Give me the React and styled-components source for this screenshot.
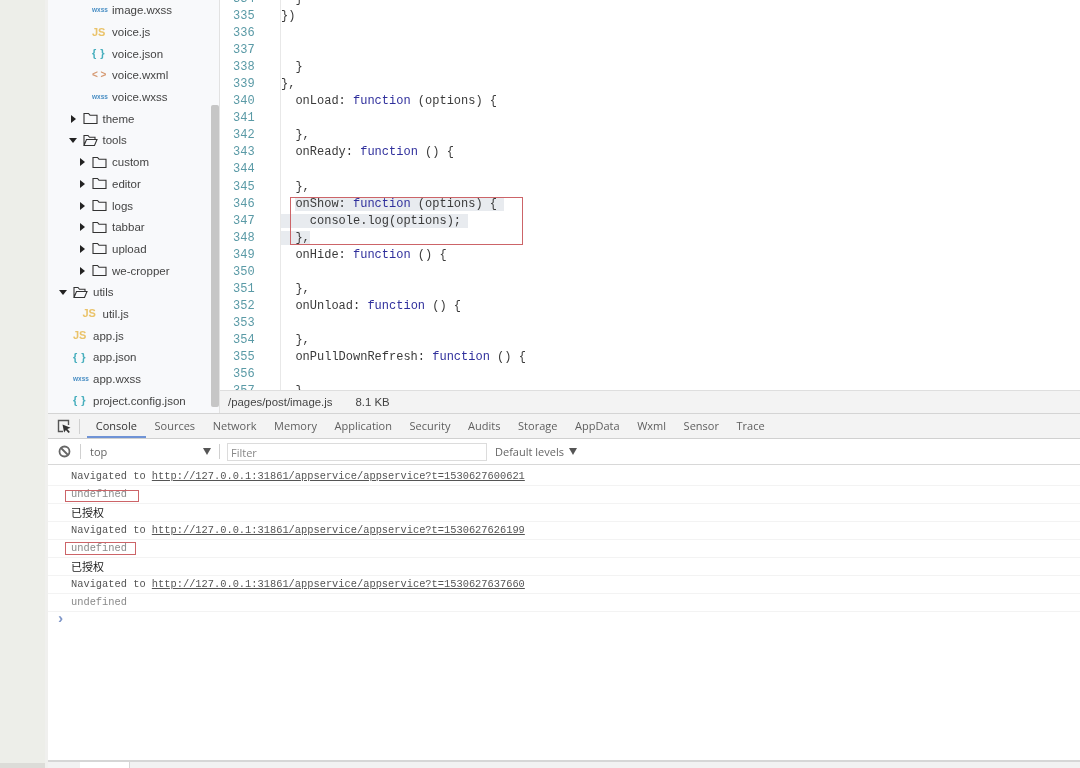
import React from "react"
import styled, { createGlobalStyle } from "styled-components"

const GlobalStyle = createGlobalStyle`
  html, body {
    margin: 0;
    padding: 0;
    background: #fff;
  }
`

const Page = styled.div`
  display: flex;
  width: 1080px;
  height: 768px;
  overflow: hidden;
  background: #fff;
  filter: blur(0.3px);
`

const Desktop = styled.div`
  flex: 0 0 45px;
  display: flex;
  flex-direction: column;
  justify-content: flex-end;
  background: #edeee9;
`

const DesktopStrip = styled.div`
  height: 5px;
  background: #dcdcd8;
`

const Shadow = styled.div`
  flex: 0 0 3px;
  background: #f0f0ee;
`

const Main = styled.div`
  flex: 1;
  min-width: 0;
  display: flex;
  flex-direction: column;
`

const TopArea = styled.div`
  flex: 0 0 414px;
  height: 414px;
  display: flex;
  overflow: hidden;
  box-sizing: border-box;
  border-bottom: 1px solid #d4d4d4;
`

const Sidebar = styled.div`
  flex: 0 0 172px;
  display: flex;
  box-sizing: border-box;
  background: #f8f9fb;
  border-right: 1px solid #e2e2e2;
  overflow: hidden;
`

const Tree = styled.div`
  flex: 1;
  margin-top: -0.5px;
  font-family: "Liberation Sans", Arial, sans-serif;
  font-size: 11.5px;
  color: #444;
`

const Row = styled.div`
  display: flex;
  align-items: center;
  height: 21.7px;
  padding-left: ${props => 14 + props.$depth * 9.5}px;
`

const CaretSlot = styled.span`
  flex: 0 0 11px;
  display: flex;
  align-items: center;
`

const Caret = styled.span`
  width: 0;
  height: 0;
  ${props => props.$open ? `
    margin-left: -3px;
    border-left: 4px solid transparent;
    border-right: 4px solid transparent;
    border-top: 5px solid #222;
  ` : `
    margin-left: -1px;
    border-top: 4px solid transparent;
    border-bottom: 4px solid transparent;
    border-left: 5px solid #222;
  `}
`

const IconSlot = styled.span`
  flex: 0 0 20px;
  display: flex;
  align-items: center;
`

const FileBadge = styled.span`
  font-family: "Liberation Sans", Arial, sans-serif;
  font-weight: 700;
  line-height: 1;
  color: ${props => props.$color};
  font-size: ${props => props.$size}px;
  letter-spacing: ${props => props.$spacing || 0}px;
`

const ScrollTrack = styled.div`
  flex: 0 0 8px;
  padding-top: 105px;
`

const ScrollThumb = styled.div`
  height: 302px;
  background: #c6c6c6;
  border-radius: 2px;
`

const Editor = styled.div`
  flex: 1;
  min-width: 0;
  display: flex;
  flex-direction: column;
`

const CodeView = styled.div`
  position: relative;
  flex: 1;
  min-height: 0;
  display: flex;
  overflow: hidden;
  font-family: "Liberation Mono", monospace;
  font-size: 12px;
  line-height: 17.05px;
`

const LineNumbers = styled.div`
  flex: 0 0 60px;
  box-sizing: border-box;
  margin-top: -9px;
  padding-left: 13px;
  color: #5a9aa6;
`

const CodeLines = styled.div`
  flex: 1;
  box-sizing: border-box;
  margin-top: -9px;
  border-left: 1px solid #e8e8e8;
  color: #3a3a3a;
  white-space: pre;
`

const CodeLine = styled.div`
  height: 17.05px;
`

const Keyword = styled.span`
  color: #2f2f9c;
`

const Selected = styled.span`
  background: #e8ebef;
`

const RedBox = styled.div`
  position: absolute;
  box-sizing: border-box;
  border: 1px solid #cc6468;
  pointer-events: none;
  left: ${props => props.$left}px;
  top: ${props => props.$top}px;
  width: ${props => props.$width}px;
  height: ${props => props.$height}px;
`

const StatusBar = styled.div`
  flex: 0 0 23px;
  display: flex;
  align-items: center;
  gap: 23px;
  box-sizing: border-box;
  padding-left: 8px;
  background: #f3f3f3;
  border-top: 1px solid #dedede;
  font-family: "Liberation Sans", Arial, sans-serif;
  font-size: 11.4px;
  color: #444;
`

const Tabs = styled.div`
  flex: 0 0 24px;
  display: flex;
  align-items: stretch;
  box-sizing: border-box;
  background: #f3f3f3;
  border-bottom: 1px solid #d0d0d0;
`

const InspectButton = styled.span`
  flex: 0 0 31px;
  display: flex;
  align-items: center;
  padding-left: 9px;
  box-sizing: border-box;
`

const Divider = styled.span`
  flex: 0 0 1px;
  align-self: center;
  height: 15px;
  background: #d0d0d0;
`

const TabList = styled.div`
  display: flex;
  margin-left: 7px;
`

const Tab = styled.span`
  box-sizing: border-box;
  padding: 0 8.8px;
  height: 24px;
  line-height: 24px;
  font-family: "Open Sans", sans-serif;
  font-size: 11px;
  color: ${props => props.$active ? "#333" : "#5f5f5f"};
  border-bottom: 2px solid ${props => props.$active ? "#6f93d6" : "transparent"};
`

const FilterBar = styled.div`
  flex: 0 0 26px;
  display: flex;
  align-items: center;
  box-sizing: border-box;
  border-bottom: 1px solid #d8d8d8;
  font-family: "Open Sans", sans-serif;
  font-size: 11px;
  color: #666;
`

const BanButton = styled.span`
  flex: 0 0 32px;
  display: flex;
  align-items: center;
  padding-left: 10px;
  box-sizing: border-box;
`

const ContextSelect = styled.span`
  flex: 0 0 138px;
  display: flex;
  align-items: center;
  justify-content: space-between;
  box-sizing: border-box;
  padding: 0 8px 0 9px;
`

const DownArrow = styled.span`
  width: 0;
  height: 0;
  border-left: 4px solid transparent;
  border-right: 4px solid transparent;
  border-top: 7px solid #555;
`

const FilterInput = styled.span`
  flex: 0 0 260px;
  height: 18px;
  line-height: 17px;
  margin-left: 7px;
  padding-left: 3px;
  box-sizing: border-box;
  border: 1px solid #dcdcdc;
  color: #888;
`

const Levels = styled.span`
  display: flex;
  align-items: center;
  gap: 5px;
  margin-left: 8px;
  margin-top: -1px;
`

const Console = styled.div`
  flex: 1;
  min-height: 0;
  padding-top: 3px;
`

const LogRow = styled.div`
  position: relative;
  height: 18px;
  line-height: 17px;
  box-sizing: border-box;
  padding-left: 23px;
  border-bottom: 1px solid #f3f3f3;
  font-family: "Liberation Mono", "Noto Sans CJK SC", monospace;
  font-size: 10.37px;
  color: ${props => props.$muted ? "#8a8a8a" : "#555"};
`

const CjkText = styled.span`
  font-family: "Noto Sans CJK SC", sans-serif;
  font-size: 11px;
  color: #222;
`

const LogLink = styled.span`
  color: #555;
  text-decoration: underline;
`

const Prompt = styled.div`
  padding: 1px 0 0 8px;
  height: 16px;
  line-height: 14px;
  font-family: "Liberation Mono", monospace;
  font-size: 15px;
  font-weight: 700;
  color: #7f96c8;
`

const BottomBar = styled.div`
  flex: 0 0 8px;
  box-sizing: border-box;
  background: #f2f2f2;
  border-top: 2px solid #d6d6d6;
  padding-left: 32px;
  overflow: hidden;
`

const BottomTab = styled.div`
  width: 49px;
  height: 8px;
  background: #fff;
  border-right: 1px solid #d6d6d6;
`

const FolderIcon = ({ open }) => (
  <svg width="15" height="13" viewBox="0 0 15 13" fill="none" stroke="#333" strokeWidth="1.1">
    {open ? (
      <path d="M1 11.5V1.5h4l1.5 1.8h5.5v2M1 11.5h10.5l2.5-6H3.5L1 11.5z" />
    ) : (
      <path d="M1 1.5h4.5L7 3.2h7v8.3H1z" />
    )}
  </svg>
)

const InspectIcon = () => (
  <svg width="14" height="15" viewBox="0 0 14 15" fill="none">
    <path d="M6 12.5H1.5V1.5h10V6" stroke="#555" strokeWidth="1.4" />
    <path d="M5.5 5.5l8 3.2-3.2 1.2 2.6 3-1.4 1.2-2.6-3-1.8 2.4z" fill="#333" />
  </svg>
)

const BanIcon = () => (
  <svg width="13" height="13" viewBox="0 0 13 13" fill="none" stroke="#666" strokeWidth="1.8">
    <circle cx="6.5" cy="6.5" r="5" />
    <path d="M3 3l7 7" />
  </svg>
)

const fileIcons = {
  wxss: <FileBadge $color="#4a8fc4" $size={6.5}>wxss</FileBadge>,
  js: <FileBadge $color="#eac36a" $size={11}>JS</FileBadge>,
  json: <FileBadge $color="#46aebd" $size={11} $spacing={0.5}>{"{ }"}</FileBadge>,
  wxml: <FileBadge $color="#d69a72" $size={10}>{"< >"}</FileBadge>,
}

const treeItems = [
  { name: "image.wxss", depth: 2, file: "wxss" },
  { name: "voice.js", depth: 2, file: "js" },
  { name: "voice.json", depth: 2, file: "json" },
  { name: "voice.wxml", depth: 2, file: "wxml" },
  { name: "voice.wxss", depth: 2, file: "wxss" },
  { name: "theme", depth: 1 },
  { name: "tools", depth: 1, open: true },
  { name: "custom", depth: 2 },
  { name: "editor", depth: 2 },
  { name: "logs", depth: 2 },
  { name: "tabbar", depth: 2 },
  { name: "upload", depth: 2 },
  { name: "we-cropper", depth: 2 },
  { name: "utils", depth: 0, open: true },
  { name: "util.js", depth: 1, file: "js" },
  { name: "app.js", depth: 0, file: "js" },
  { name: "app.json", depth: 0, file: "json" },
  { name: "app.wxss", depth: 0, file: "wxss" },
  { name: "project.config.json", depth: 0, file: "json" },
]

// [before selection, selection]
const codeLines = [
  ["  }"], ["})"], [""], [""], ["  }"], ["},"],
  ["  onLoad: function (options) {"], [""], ["  },"],
  ["  onReady: function () {"], [""], ["  },"],
  ["  ", "onShow: function (options) { "],
  ["", "    console.log(options); "],
  ["", "  },"],
  ["  onHide: function () {"], [""], ["  },"],
  ["  onUnload: function () {"], [""], ["  },"],
  ["  onPullDownRefresh: function () {"], [""], ["  }"],
]

const highlight = text =>
  text.split(/(function)/).map((part, i) =>
    part === "function" ? <Keyword key={i}>{part}</Keyword> : part
  )

const consoleRows = [
  { link: "1530627600621" },
  { muted: true, box: { left: 17, top: 4, width: 74, height: 12 } },
  { cjk: true },
  { link: "1530627626199" },
  { muted: true, box: { left: 17, top: 2, width: 71, height: 13 } },
  { cjk: true },
  { link: "1530627637660" },
  { muted: true },
]

const tabs = ["Console", "Sources", "Network", "Memory", "Application", "Security", "Audits", "Storage", "AppData", "Wxml", "Sensor", "Trace"]

const App = () => (
  <Page>
    <GlobalStyle />
    <Desktop>
      <DesktopStrip />
    </Desktop>
    <Shadow />
    <Main>
      <TopArea>
        <Sidebar>
          <Tree>
            {treeItems.map(item => (
              <Row key={item.name} $depth={item.depth}>
                <CaretSlot>{!item.file && <Caret $open={item.open} />}</CaretSlot>
                <IconSlot>{item.file ? fileIcons[item.file] : <FolderIcon open={item.open} />}</IconSlot>
                <span>{item.name}</span>
              </Row>
            ))}
          </Tree>
          <ScrollTrack>
            <ScrollThumb />
          </ScrollTrack>
        </Sidebar>
        <Editor>
          <CodeView>
            <LineNumbers>
              {codeLines.map((_, i) => <CodeLine key={i}>{334 + i}</CodeLine>)}
            </LineNumbers>
            <CodeLines>
              {codeLines.map(([before, selected], i) => (
                <CodeLine key={i}>
                  {highlight(before)}
                  {selected && <Selected>{highlight(selected)}</Selected>}
                </CodeLine>
              ))}
            </CodeLines>
            <RedBox $left={70} $top={197} $width={233} $height={48} />
          </CodeView>
          <StatusBar>
            <span>/pages/post/image.js</span>
            <span>8.1 KB</span>
          </StatusBar>
        </Editor>
      </TopArea>
      <Tabs>
        <InspectButton><InspectIcon /></InspectButton>
        <Divider />
        <TabList>
          {tabs.map((tab, i) => <Tab key={tab} $active={i === 0}>{tab}</Tab>)}
        </TabList>
      </Tabs>
      <FilterBar>
        <BanButton><BanIcon /></BanButton>
        <Divider />
        <ContextSelect>
          <span>top</span>
          <DownArrow />
        </ContextSelect>
        <Divider />
        <FilterInput>Filter</FilterInput>
        <Levels>Default levels <DownArrow /></Levels>
      </FilterBar>
      <Console>
        {consoleRows.map((row, i) => (
          <LogRow key={i} $muted={row.muted}>
            {row.link && <>Navigated to <LogLink>{`http://127.0.0.1:31861/appservice/appservice?t=${row.link}`}</LogLink></>}
            {row.muted && "undefined"}
            {row.cjk && <CjkText>已授权</CjkText>}
            {row.box && <RedBox $left={row.box.left} $top={row.box.top} $width={row.box.width} $height={row.box.height} />}
          </LogRow>
        ))}
        <Prompt>›</Prompt>
      </Console>
      <BottomBar>
        <BottomTab />
      </BottomBar>
    </Main>
  </Page>
)

export default App
